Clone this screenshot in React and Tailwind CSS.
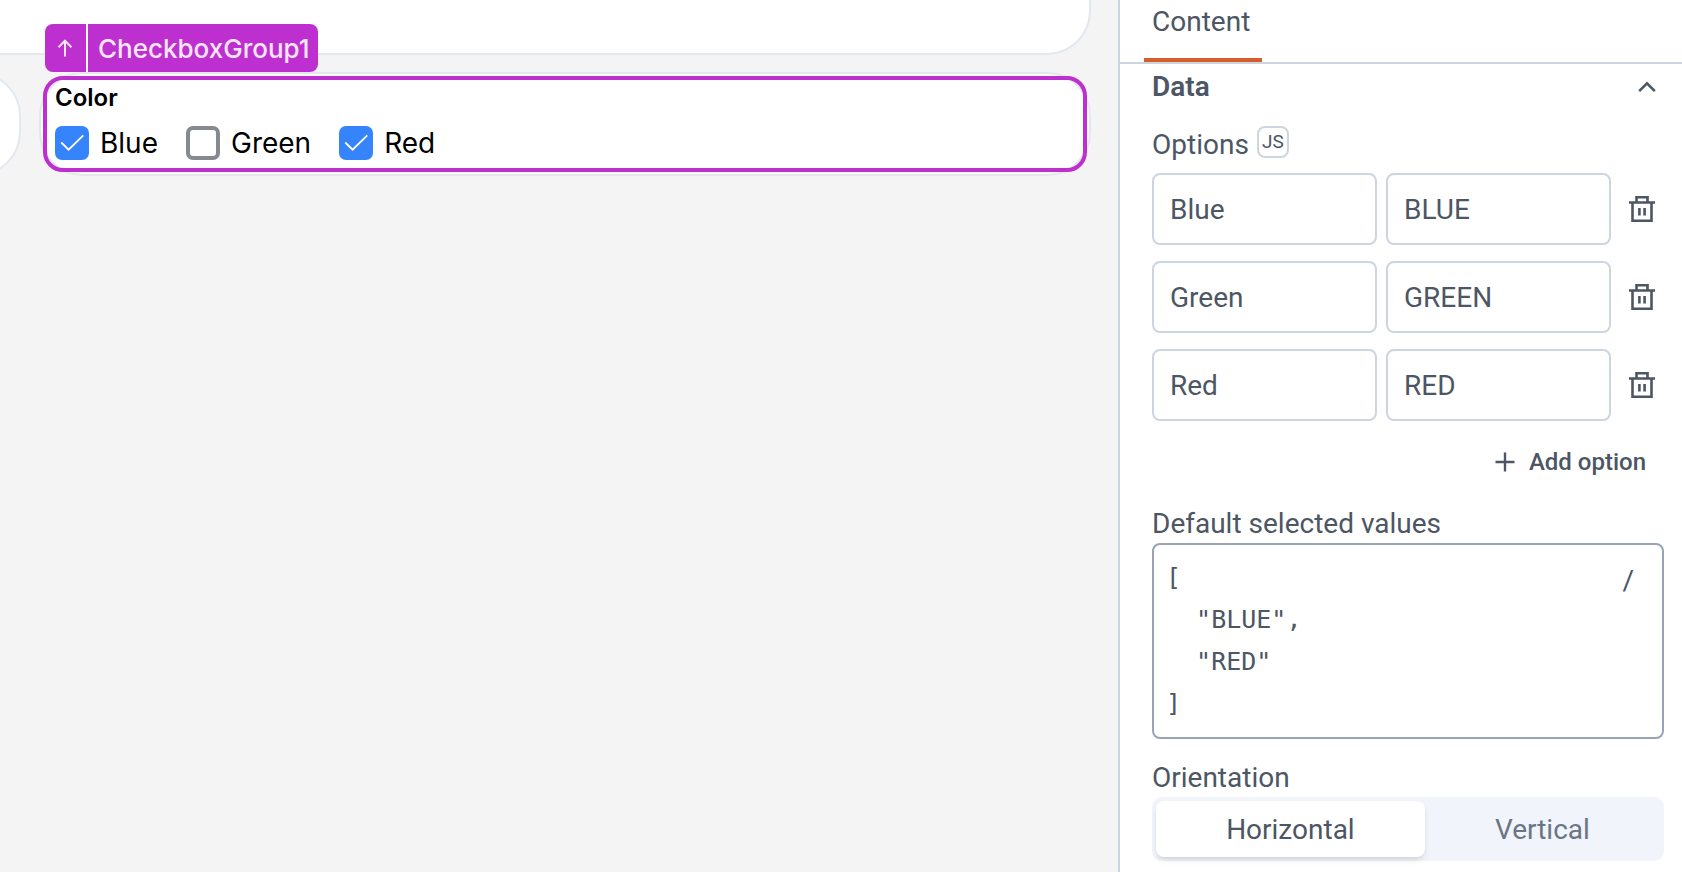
import { useState } from "react";

const CHOICES = [
  { label: "Blue", value: "BLUE", checked: true },
  { label: "Green", value: "GREEN", checked: false },
  { label: "Red", value: "RED", checked: true },
];

function TrashIcon() {
  return (
    <svg width="28" height="28" viewBox="0 0 28 28" fill="none" stroke="currentColor" strokeWidth="2.6" aria-hidden="true">
      <path d="M1 7.5h26M8.5 7V2.2h11V7M4.5 7.5v18.3h19V7.5M11.4 13v7.6M16.6 13v7.6" />
    </svg>
  );
}

function CheckOption({ label, defaultChecked }) {
  return (
    <label className="flex items-center gap-[11px]">
      <span className="grid size-[34px]">
        <input
          type="checkbox"
          defaultChecked={defaultChecked}
          className="peer col-start-1 row-start-1 size-[34px] appearance-none rounded-[7px] border-4 border-[#858a91] bg-white checked:border-[#3584fb] checked:bg-[#3584fb]"
        />
        <svg
          className="pointer-events-none invisible col-start-1 row-start-1 size-[34px] peer-checked:visible"
          viewBox="0 0 34 34"
          fill="none"
          stroke="#fff"
          strokeWidth="1.8"
          aria-hidden="true"
        >
          <path d="M6.3 16.5L13.6 23.7L28.3 9.3" />
        </svg>
      </span>
      <span>{label}</span>
    </label>
  );
}

function Canvas() {
  return (
    <main className="min-w-0 flex-1 overflow-hidden bg-[#f4f4f4]">
      <div className="mr-[27px] h-[55px] rounded-br-[44px] border-r-2 border-b-2 border-[#e3e8ef] bg-white" />
      <div className="mt-[17px] flex gap-[18px] pr-[27px]">
        <div className="-ml-20 w-[101px] shrink-0 rounded-[44px] border-2 border-[#e3e8ef] bg-white" />
        <section className="relative min-w-0 flex-1 rounded-[44px] border-2 border-[#e3e8ef] bg-white px-[14px] pt-2 pb-[14px]">
          <div className="pointer-events-none absolute inset-x-[2px] inset-y-[2px] rounded-[20px] border-4 border-[#bd30cf]" />
          <div className="absolute -top-[50px] left-[4px] flex h-12 gap-[2px] overflow-hidden rounded-lg bg-white text-[#fbe6fd]">
            <button aria-label="Select parent" className="flex w-[41px] items-center justify-center bg-[#bd30cf] pr-[2px]">
              <svg width="16" height="18" viewBox="0 0 16 18" fill="none" stroke="currentColor" strokeWidth="2" aria-hidden="true">
                <path d="M8 17.5V2M1.5 8.2L8 1.7l6.5 6.5" />
              </svg>
            </button>
            <button className="bg-[#bd30cf] pr-2 pl-[10px] text-[26px] font-medium">CheckboxGroup1</button>
          </div>
          <fieldset>
            <legend className="text-[24px] leading-8 font-semibold">Color</legend>
            <div className="mt-3 flex gap-7 text-[28px] leading-[34px]">
              {CHOICES.map((c) => (
                <CheckOption key={c.value} label={c.label} defaultChecked={c.checked} />
              ))}
            </div>
          </fieldset>
        </section>
      </div>
    </main>
  );
}

function PropertyPane() {
  const [orientation, setOrientation] = useState("Horizontal");
  const field =
    "h-[72px] w-0 min-w-0 flex-1 rounded-lg border-2 border-[#cdd5e1] bg-white px-4 outline-none";
  return (
    <aside className="w-[564px] shrink-0 overflow-hidden border-l-2 border-[#cdd5e1] bg-white font-[Roboto,sans-serif] text-[28px] leading-8 text-[#4c5664]">
      <div role="tablist" className="flex border-b-2 border-[#cdd5e1] pl-6">
        <button role="tab" aria-selected="true" className="min-w-[118px] border-b-4 border-[#d65d2d] px-2 pt-[6px] pb-5 text-left">
          Content
        </button>
      </div>
      <div className="pr-[18px] pl-8">
        <button className="flex w-full items-center justify-between pt-[7px] pr-2 text-left font-semibold">
          Data
          <svg width="18" height="12" viewBox="0 0 18 12" fill="none" stroke="currentColor" strokeWidth="2.6" aria-hidden="true">
            <path d="M1.2 10.2L9 2.4l7.8 7.8" />
          </svg>
        </button>
        <div className="mt-[23px] flex items-start gap-2">
          <h3 className="pt-[3px]">Options</h3>
          <button className="size-8 rounded-lg border-2 border-[#cdd5e1] text-[19px] leading-7">JS</button>
        </div>
        <ul className="mt-3 flex flex-col gap-4">
          {CHOICES.map((c) => (
            <li key={c.value} className="flex gap-[9px]">
              <input aria-label="Option label" defaultValue={c.label} className={field} />
              <input aria-label="Option value" defaultValue={c.value} className={field} />
              <button aria-label={`Delete ${c.label}`} className="flex w-11 items-center justify-center">
                <TrashIcon />
              </button>
            </li>
          ))}
        </ul>
        <div className="mt-[25px] flex justify-end pr-[18px]">
          <button className="flex items-center gap-[14px] text-[24px] font-medium">
            <svg width="20" height="20" viewBox="0 0 20 20" fill="none" stroke="currentColor" strokeWidth="2.4" aria-hidden="true">
              <path d="M10 0.5v19M0.5 10h19" />
            </svg>
            Add option
          </button>
        </div>
        <label htmlFor="defaults" className="mt-[30px] block">
          Default selected values
        </label>
        <div className="relative mt-[3px]">
          <textarea
            id="defaults"
            spellCheck="false"
            className="block h-[196px] w-full resize-none overflow-hidden rounded-lg border-2 border-[#98a4b5] bg-white px-3 py-3 font-['DejaVu_Sans_Mono',monospace] text-[25px] leading-[42px] outline-none"
            defaultValue={'[\n  "BLUE",\n  "RED"\n]'}
          />
          <button aria-label="Insert command" className="absolute top-[22px] right-[30px]">
            /
          </button>
        </div>
        <h3 className="mt-[23px]">Orientation</h3>
        <div className="mt-[3px] flex h-16 rounded-[10px] bg-[#f1f4fa] p-1">
          {["Horizontal", "Vertical"].map((o) => (
            <button
              key={o}
              aria-pressed={orientation === o}
              onClick={() => setOrientation(o)}
              className={
                orientation === o
                  ? "grow-[8] basis-0 rounded-lg bg-white pt-[2px] shadow-md"
                  : "grow-[7] basis-0 rounded-lg pt-[2px] text-[#6a7585]"
              }
            >
              {o}
            </button>
          ))}
        </div>
      </div>
    </aside>
  );
}

export default function App() {
  return (
    <div className="flex h-screen overflow-hidden font-[Inter,sans-serif] text-black">
      <Canvas />
      <PropertyPane />
    </div>
  );
}
